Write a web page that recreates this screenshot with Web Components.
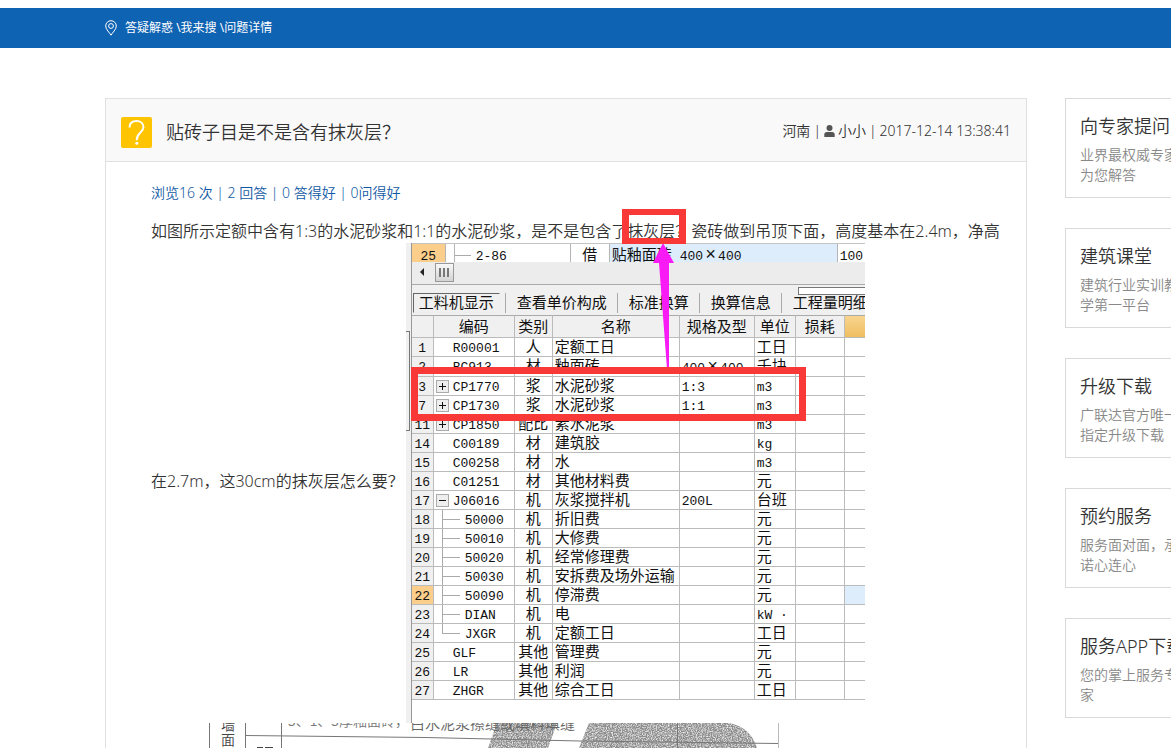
<!DOCTYPE html>
<html lang="zh-CN">
<head>
<meta charset="utf-8">
<title>贴砖子目是不是含有抹灰层？</title>
<style>
  html { overflow-x: hidden; }
  body {
    margin: 0;
    padding-top: 8px;
    box-sizing: border-box;
    min-height: 100vh;
    display: flex;
    flex-direction: column;
    overflow-x: hidden;
    background: #fff;
    color: #333;
    font-family: "Noto Sans", "Noto Sans CJK SC", sans-serif;
    font-weight: 350;
  }
</style>
</head>
<body>
<crumb-bar>
  <a href="#">答疑解惑</a> \<a href="#">我来搜</a> \<a href="#">问题详情</a>
</crumb-bar>
<page-columns>
  <question-card>
    <span slot="title">贴砖子目是不是含有抹灰层？</span>
    <span slot="region">河南</span>
    <span slot="author">小小</span>
    <time slot="date">2017-12-14 13:38:41</time>
    <span slot="stats">浏览16 次 | 2 回答 | 0 答得好 | 0问得好</span>
    如图所示定额中含有1:3的水泥砂浆和1:1的水泥砂浆，是不是包含了抹灰层？瓷砖做到吊顶下面，高度基本在2.4m，净高在2.7m，这30cm的抹灰层怎么要？<quota-sheet></quota-sheet><scan-strip></scan-strip>
  </question-card>
  <side-card slot="side"><span slot="title">向专家提问</span>业界最权威专家为您解答</side-card>
  <side-card slot="side"><span slot="title">建筑课堂</span>建筑行业实训教学第一平台</side-card>
  <side-card slot="side"><span slot="title">升级下载</span>广联达官方唯一指定升级下载</side-card>
  <side-card slot="side"><span slot="title">预约服务</span>服务面对面，承诺心连心</side-card>
  <side-card slot="side"><span slot="title">服务APP下载</span>您的掌上服务专家</side-card>
</page-columns>

<script>
const define = (name, html, setup) => {
  const template = document.createElement('template');
  template.innerHTML = html;
  customElements.define(name, class extends HTMLElement {
    constructor() {
      super();
      const root = this.attachShadow({ mode: 'open' });
      root.append(template.content.cloneNode(true));
      if (setup) setup(root);
    }
  });
};

define('crumb-bar', `
  <style>
    :host { display: block; background: #0f63b3; color: #fff; font-weight: 400; }
    nav { display: flex; align-items: center; gap: 8px; height: 40px; padding-left: 105px; font-size: 12px; line-height: 16px; }
    ::slotted(a) { color: inherit; text-decoration: none; }
  </style>
  <nav>
    <svg width="12" height="16" viewBox="0 0 12 16" fill="none" stroke="#fff"><path d="M6 15.2C4.8 12.8 .7 9.6 .7 6a5.3 5.3 0 0 1 10.6 0C11.3 9.6 7.200 12.8 6 15.200Z"/><circle cx="6" cy="6" r="2.400"/></svg>
    <div><slot></slot></div>
  </nav>`);

define('page-columns', `
  <style>
    :host { flex: 1; display: grid; grid-template-columns: minmax(0, 1fr) 135px; column-gap: 38px;
            margin: 50px -29px 0 105px; }
    aside { display: flex; flex-direction: column; gap: 30px; }
  </style>
  <slot></slot>
  <aside><slot name="side"></slot></aside>`);

define('question-card', `
  <style>
    :host { display: block; border: 1px solid #e0e0e0; border-bottom: 0; }
    header { display: flex; align-items: center; height: 58px; padding: 4px 15px 0; gap: 14px;
             background: #f9f9f9; border-bottom: 1px solid #e0e0e0; }
    h1 { flex: 1; margin: 0; font-size: 18px; font-weight: inherit; line-height: 24px; }
    .meta { display: flex; align-items: center; gap: 3px; padding-bottom: 3px; font-size: 14px; line-height: 20px; }
    .icon { display: block; }
    .content { padding: 20px 15px 0 45px; }
    .stats { margin: 0 0 16px; font-size: 14px; line-height: 21px; color: #1159a5; }
    .text { font-size: 16px; line-height: 24px; }
  </style>
  <header>
    <svg class="icon" width="31" height="31" viewBox="0 0 31 31"><rect width="31" height="31" rx="2" fill="#fec400"/><path d="M8.500 10.500C8.500 6 11.500 4 15.500 4s7 2.300 7 6.200c0 5-6.700 6-6.700 12.300v.8" fill="none" stroke="#fff" stroke-width="2"/><circle cx="15.800" cy="26.300" r="1.500" fill="#fff"/></svg>
    <h1><slot name="title"></slot></h1>
    <div class="meta">
      <slot name="region"></slot><span>|</span>
      <svg width="11" height="12" viewBox="0 0 11 12" fill="#555"><circle cx="5.500" cy="3" r="3"/><path d="M.3 12V9.600Q.3 7 3 7h5q2.700 0 2.700 2.600V12Z"/></svg>
      <slot name="author"></slot><span>|</span>
      <slot name="date"></slot>
    </div>
  </header>
  <div class="content">
    <p class="stats"><slot name="stats"></slot></p>
    <div class="text"><slot></slot></div>
  </div>`);

define('side-card', `
  <style>
    :host { display: block; box-sizing: border-box; height: 100px; padding: 14px 14px 0; border: 1px solid #d9d9d9;
            font-size: 14px; line-height: 20px; color: #888; }
    h2 { margin: 0 0 6px; font-size: 18px; font-weight: inherit; line-height: 26px; white-space: nowrap; color: #333; }
    p { margin: 0; }
  </style>
  <h2><slot name="title"></slot></h2>
  <p><slot></slot></p>`);

/* Rows of the quota sheet: number, code, kind, name, spec, unit, tree role */
const rows = [
  ['1', 'R00001', '人', '定额工日', '', '工日'],
  ['2', 'BC913', '材', '釉面砖', '400×400', '千块'],
  ['3', 'CP1770', '浆', '水泥砂浆', '1:3', 'm3', 'plus'],
  ['7', 'CP1730', '浆', '水泥砂浆', '1:1', 'm3', 'plus'],
  ['11', 'CP1850', '配比', '素水泥浆', '', 'm3', 'plus'],
  ['14', 'C00189', '材', '建筑胶', '', 'kg'],
  ['15', 'C00258', '材', '水', '', 'm3'],
  ['16', 'C01251', '材', '其他材料费', '', '元'],
  ['17', 'J06016', '机', '灰浆搅拌机', '200L', '台班', 'minus'],
  ['18', '50000', '机', '折旧费', '', '元', 'leaf'],
  ['19', '50010', '机', '大修费', '', '元', 'leaf'],
  ['20', '50020', '机', '经常修理费', '', '元', 'leaf'],
  ['21', '50030', '机', '安拆费及场外运输', '', '元', 'leaf'],
  ['22', '50090', '机', '停滞费', '', '元', 'leaf'],
  ['23', 'DIAN', '机', '电', '', 'kW ·', 'leaf'],
  ['24', 'JXGR', '机', '定额工日', '', '工日', 'leaf last'],
  ['25', 'GLF', '其他', '管理费', '', '元'],
  ['26', 'LR', '其他', '利润', '', '元'],
  ['27', 'ZHGR', '其他', '综合工日', '', '工日'],
];
const wide = s => s.replace('×', '<i>×</i>');

define('quota-sheet', `
  <style>
    :host { display: inline-block; position: relative; vertical-align: middle; box-sizing: border-box;
            width: 459px; height: 480px; margin-left: 2px; padding-left: 5px; background: linear-gradient(90deg, #f0f0f0 5px, #fff 5px);
            font: 400 13px/18px "Liberation Mono", "Noto Sans CJK SC", monospace; color: #111; }
    * { box-sizing: border-box; }
    i { display: inline-block; width: 15px; text-align: center; font-style: normal; font-size: 18px; line-height: 12px; }
    .sheet { border-left: 1px solid #999; height: 480px; overflow: hidden; }
    .top { display: grid; grid-template-columns: 34px 9px 116px 39px 228px 1fr; height: 19px; border-top: 1px solid #c4c4c4; line-height: 25px; overflow: hidden; }
    .top > * { border-right: 1px solid #b5b5b5; white-space: nowrap; overflow: hidden; }
    .top > :last-child { border-right: 0; padding-left: 2px; }
    .top .sel { background: #fbcf8b; text-align: center; }
    .top .code { display: flex; gap: 5px; }
    .top .code::before { content: ""; width: 16px; height: 11px; border-bottom: 1px solid #aaa; }
    .top .name { display: flex; gap: 8px; padding-left: 2px; background: #deedfc; }
    .cjk { font-size: 15px; }
    .scroll { display: flex; align-items: flex-start; height: 23px; background: #ececec; border-bottom: 1px solid #aaa; padding: 1px 0 0 7px; gap: 10px; }
    .scroll svg { margin-top: 5px; }
    .scroll span { display: flex; justify-content: center; align-items: center; gap: 2px; width: 19px; height: 19px; border: 1px solid #999; background: linear-gradient(#f8f8f8, #d4d4d4); }
    .scroll b { width: 2px; height: 9px; background: #777; }
    .tabs { position: relative; display: flex; align-items: flex-end; height: 30px; background: #f0f0f0; }
    button { font: inherit; color: inherit; background: none; border: 0; margin: 0; padding: 0; }
    .tabs button { flex: none; height: 20px; margin-bottom: 2px; line-height: 16px; font-size: 15px; padding: 4px 10px 0 11px; border-left: 1px solid #aaa; white-space: nowrap; }
    .tabs button.on { margin: 0 5px 2px 1px; width: 87px; padding: 3px 5px 0; border: 1px solid #eee; border-top-color: #666; border-left-color: #666; }
    .tabs::after { content: ""; position: absolute; left: 386px; right: -2px; top: 2px; height: 6px; border: 1px solid #777; background: #fff; }
    table { width: 453px; table-layout: fixed; border-collapse: separate; border-spacing: 0; }
    th, td { height: 19px; padding: 4px 0 0 2px; border-right: 1px solid #bbb; border-bottom: 1px solid #bbb; overflow: hidden; text-align: left; vertical-align: top; white-space: nowrap; font-weight: 400; line-height: 14px; }
    th:last-child, td:last-child { border-right: 0; }
    thead th { height: 23px; padding: 4px 0 0; border-top: 1px solid #aaa; text-align: center; background: #f0f0f0; font-size: 15px; line-height: 17px; }
    thead th:last-child { background: linear-gradient(#f8d48f, #efbe60); }
    tbody th { padding: 4px 0 0; text-align: center; background: #f0f0f0; }
    td.code { padding: 0 0 0 2px; }
    td.cjk { font-size: 15px; }
    td.kind { padding: 4px 0 0; text-align: center; font-size: 15px; }
    .tree { display: flex; align-items: center; height: 18px; padding-left: 17px; }
    .tree span { padding-top: 4px; }
    .tree.plus, .tree.minus { padding-left: 0; gap: 4px; }
    .tree button { width: 13px; height: 13px; border: 1px solid #aaa; background: #eee; display: grid; place-items: center; }
    .tree.leaf { padding-left: 6px; gap: 5px; }
    .tree.leaf::before { content: ""; width: 17px; height: 18px; border-left: 1px solid #aaa; background: linear-gradient(#aaa, #aaa) 0 9px / 17px 1px no-repeat; }
    .tree.last::before { height: 10px; align-self: flex-start; }
    tr.now th { background: #fbcf8b; }
    tr.now td:last-child { background: #deedfc; }
    .mark { position: absolute; border: 7px solid #f93838; pointer-events: none; }
    .word { left: 216px; top: -34px; width: 64px; height: 35px; border-width: 6px 7px; }
    .rows { left: 5px; top: 124px; width: 395px; height: 54px; }
    .arrow { position: absolute; left: 246px; top: 0; }
    .edge { position: absolute; left: 0; top: 88px; width: 4px; height: 100px; border: 1px solid #777; border-left: 0; }
  </style>
  <div class="sheet">
    <div class="top">
      <span class="sel">25</span><span></span><span class="code">2-86</span>
      <span class="cjk" style="text-align:center">借</span>
      <span class="name"><span class="cjk">贴釉面砖</span><span>400<i>×</i>400</span></span><span>100</span>
    </div>
    <div class="scroll"><svg width="6" height="8" viewBox="0 0 6 8"><path d="M5 0v8L1 4Z" fill="#222"/></svg><span><b></b><b></b><b></b></span></div>
    <div class="tabs"><button class="on">工料机显示</button><button>查看单价构成</button><button>标准换算</button><button>换算信息</button><button>工程量明细</button></div>
    <table>
      <colgroup><col style="width:22px"><col style="width:81px"><col style="width:38px"><col style="width:127px"><col style="width:75px"><col style="width:41px"><col style="width:49px"><col></colgroup>
      <thead><tr><th></th><th>编码</th><th>类别</th><th>名称</th><th>规格及型</th><th>单位</th><th>损耗</th><th></th></tr></thead>
      <tbody></tbody>
    </table>
  </div>
  <div class="edge"></div>
  <svg class="arrow" width="24" height="128" viewBox="0 0 24 128"><path d="M11 0L22 20H17L17 126H15L7 20H1Z" fill="#f91bf5"/></svg>
  <div class="mark word"></div>
  <div class="mark rows"></div>`,
  root => {
    root.querySelector('tbody').innerHTML = rows.map(([no, code, kind, name, spec, unit, role = '']) => {
      const box = role === 'plus' || role === 'minus'
        ? `<button aria-label="${role}"><svg width="9" height="9" viewBox="0 0 9 9" stroke="#111" fill="none"><path d="M1 4.500h7${role === 'plus' ? 'M4.500 1v7' : ''}"/></svg></button>` : '';
      return `<tr class="${no === '22' ? 'now' : ''}"><th scope="row">${no}</th><td class="code"><div class="tree ${role}">${box}<span>${code}</span></div></td>
        <td class="kind">${kind}</td><td class="cjk">${name}</td><td>${wide(spec)}</td>
        <td class="${/[a-z]/.test(unit) ? '' : 'cjk'}">${unit}</td><td></td><td></td></tr>`;
    }).join('');
  });

define('scan-strip', `
  <style>
    :host { display: block; height: 25px; overflow: hidden; }
    svg { display: block; font-family: "Noto Sans CJK SC", sans-serif; }
  </style>
  <svg width="629" height="25" viewBox="151 723 629 25">
    <defs>
      <filter id="grain" x="0" y="0" width="1" height="1">
        <feTurbulence type="fractalNoise" baseFrequency=".8" numOctaves="2" seed="4"/>
        <feColorMatrix values="0 0 0 0 1  0 0 0 0 1  0 0 0 0 1  2 0 0 0 -.8"/>
        <feComposite in2="SourceGraphic" operator="in" result="n"/>
        <feMerge><feMergeNode in="SourceGraphic"/><feMergeNode in="n"/></feMerge>
      </filter>
    </defs>
    <g fill="#8c8c8c" filter="url(#grain)"><path d="M497 723H557L548 748H488Z"/><path d="M589 723H728Q750 726 757 748H579Z"/></g>
    <g fill="#444" font-size="14"><text x="221" y="730">墙</text><text x="221" y="745">面</text></g>
    <text x="288" y="726" font-size="14" fill="#777">5、1、5厚釉面砖，</text>
    <text x="410" y="729" font-size="15" fill="#666">白水泥浆擦缝或填料填缝</text>
    <g fill="none" stroke="#777"><path d="M209.500 723v25M245.500 723v25M281.500 723v25"/><path d="M245 735.500L425 737.500L580 741L778 743.500"/><path d="M778.500 723v25" stroke="#bbb"/><path d="M677.500 723v25"/><path d="M257 747.500h6M265 747.500h8" stroke="#444"/></g>
  </svg>`);
</script>
</body>
</html>
